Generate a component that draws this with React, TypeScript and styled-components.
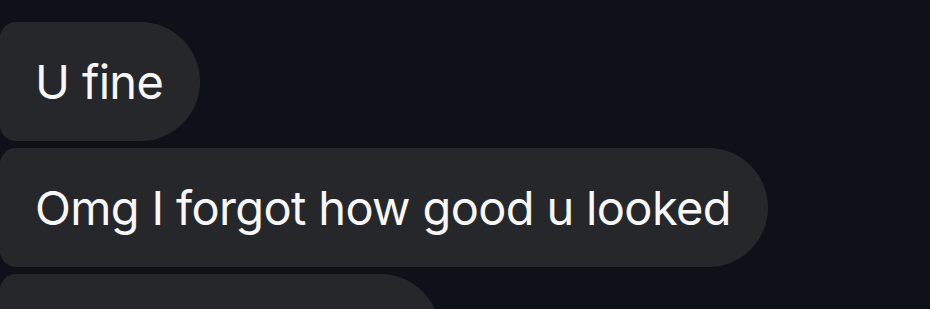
import React from "react";
import styled, { createGlobalStyle } from "styled-components";

const Global = createGlobalStyle`
  html, body { margin: 0; padding: 0; background: #0e1118; }
  body { width: 930px; height: 309px; overflow: hidden; }
`;

const Thread = styled.div`
  box-sizing: border-box;
  height: 309px;
  overflow: hidden;
  display: flex;
  flex-direction: column;
  align-items: flex-start;
  gap: 7px;
  padding-top: 22px;
  font-family: Inter, "Liberation Sans", sans-serif;
`;

const Bubble = styled.div`
  box-sizing: border-box;
  flex-shrink: 0;
  height: 119px;
  display: flex;
  align-items: center;
  padding: 0 37px 0 35px;
  background: #25272b;
  color: #f7f7f7;
  font-size: 47px;
  font-weight: 400;
  letter-spacing: -0.65px;
  border-radius: 16px 60px 60px 16px;
  white-space: nowrap;
`;

const GhostBubble = styled(Bubble)`
  width: 440px;
`;

export default function App() {
  return (
    <>
      <Global />
      <Thread>
        <Bubble>U fine</Bubble>
        <Bubble>Omg I forgot how good u looked</Bubble>
        <GhostBubble />
      </Thread>
    </>
  );
}
